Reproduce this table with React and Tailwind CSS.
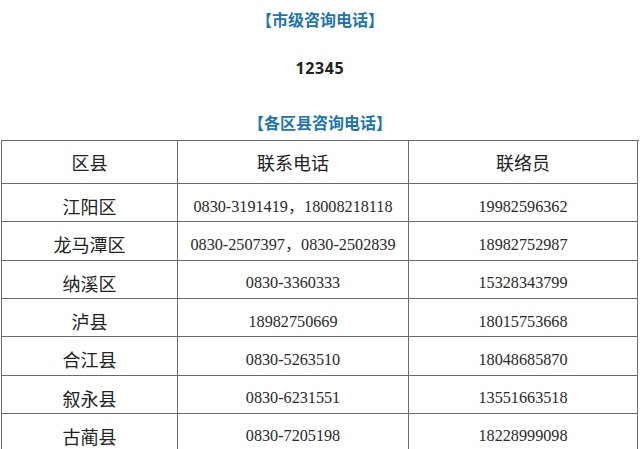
import React from "react";

const rows = [
  ["江阳区", "0830-3191419，18008218118", "19982596362"],
  ["龙马潭区", "0830-2507397，0830-2502839", "18982752987"],
  ["纳溪区", "0830-3360333", "15328343799"],
  ["泸县", "18982750669", "18015753668"],
  ["合江县", "0830-5263510", "18048685870"],
  ["叙永县", "0830-6231551", "13551663518"],
  ["古蔺县", "0830-7205198", "18228999098"],
];

export default function App() {
  return (
    <div className="w-[640px] h-[449px] overflow-hidden bg-white flex flex-col items-center font-['Noto_Sans_CJK_SC',sans-serif]">
      <div className="mt-[7px] h-[24px] leading-[24px] text-[16px] font-bold text-[#1e74ad]">
        【市级咨询电话】
      </div>
      <div className="mt-[25px] h-[24px] leading-[24px] text-[16px] font-bold text-[#222] tracking-[0.6px] font-['Noto_Sans',sans-serif]">
        12345
      </div>
      <div className="mt-[30px] h-[24px] leading-[24px] text-[16px] font-bold text-[#1e74ad]">
        【各区县咨询电话】
      </div>

      {/* district table */}
      <div className="mt-[6px] ml-[1px] self-start w-[638px] border-l border-t border-[#6b6b6b] grid grid-cols-[176px_231px_229px]">
        {["区县", "联系电话", "联络员"].map((h) => (
          <div
            key={h}
            className="h-[43px] flex items-center justify-center border-r border-b border-[#6b6b6b] text-[18px] text-[#222]"
          >
            {h}
          </div>
        ))}
        {rows.map((r) => (
          <React.Fragment key={r[0]}>
            <div className="h-[38.33px] pt-[8px] flex items-center justify-center border-r border-b border-[#6b6b6b] text-[18px] text-[#222]">
              {r[0]}
            </div>
            <div className="h-[38.33px] pt-[8px] flex items-center justify-center border-r border-b border-[#6b6b6b] text-[16.2px] text-[#2a2a2a] font-['Liberation_Serif','Noto_Sans_CJK_SC',serif]">
              {r[1]}
            </div>
            <div className="h-[38.33px] pt-[8px] flex items-center justify-center border-r border-b border-[#6b6b6b] text-[16.2px] text-[#2a2a2a] font-['Liberation_Serif','Noto_Sans_CJK_SC',serif]">
              {r[2]}
            </div>
          </React.Fragment>
        ))}
      </div>
    </div>
  );
}
